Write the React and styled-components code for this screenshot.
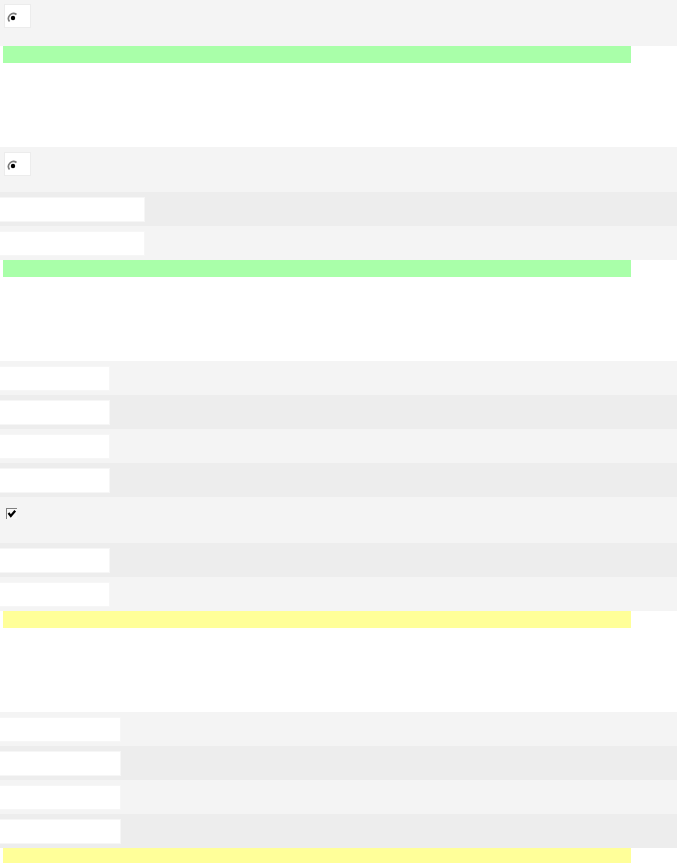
import React from 'react';
import styled, { createGlobalStyle } from 'styled-components';

// --- Styles --- //

const GlobalStyle = createGlobalStyle`
  body {
    margin: 0;
    background: #ffffff;
    font-family: "Liberation Sans", Arial, sans-serif;
  }
`

const Page = styled.div`
  display: flex;
  flex-direction: column;
  width: 677px;
`

const Section = styled.section`
  display: flex;
  flex-direction: column;
  margin-top: ${p => p.gap || 0}px;
`

const Panel = styled.div`
  background-color: #f4f4f4;
  height: ${p => p.h}px;
  padding: ${p => p.pad || '5px 4px'};
  box-sizing: border-box;
`

const RadioBox = styled.div`
  width: 27px;
  height: 24px;
  background-color: #ffffff;
  border: 1px solid #ececec;
  box-sizing: border-box;
  display: flex;
  align-items: center;
  padding: 3px 0 0 2px;
`

const CheckBox = styled.div`
  width: 11px;
  height: 11px;
  margin: 11px 0 0 6px;
  box-sizing: border-box;
  border-top: 1px solid #808080;
  border-left: 1px solid #808080;
  background-color: #f8f8f8;
  display: flex;
`

const Row = styled.div`
  height: 34px;
  display: flex;
  align-items: center;
  background-color: ${p => (p.dark ? '#ededed' : '#f4f4f4')};
`

const Field = styled.div`
  width: ${p => p.w}px;
  height: 25px;
  background-color: #ffffff;
  border: 1px solid #f6f6f6;
  border-left: none;
  box-sizing: border-box;
`

const Bar = styled.div`
  height: 17px;
  width: 628px;
  margin-left: 3px;
  background-color: ${p => (p.tone === 'yellow' ? '#ffff99' : '#a9ffa9')};
`

// --- Component --- //

const Radio = () => (
  <RadioBox>
    <svg width="12" height="12" viewBox="0 0 12 12">
      <path d="M9.5 2.5 A5 5 0 0 0 2.5 9.5" stroke="#7a7a7a" strokeWidth="1.6" fill="none" />
      <circle cx="6" cy="6" r="2.2" fill="#000" />
    </svg>
  </RadioBox>
)

const Check = () => (
  <CheckBox>
    <svg width="10" height="10" viewBox="0 0 10 10">
      <path d="M1.5 4 L3.8 7 L8.2 1.8" stroke="#000" strokeWidth="2.2" fill="none" />
    </svg>
  </CheckBox>
)

const Rows = ({ count, width, startDark }) =>
  Array.from({ length: count }).map((_, i) => (
    <Row key={i} dark={startDark ? i % 2 === 0 : i % 2 === 1}>
      <Field w={width} />
    </Row>
  ))

const App = () => (
  <Page>
    <GlobalStyle />
    <Section>
      <Panel h={46} pad="4px 4px">
        <Radio />
      </Panel>
      <Bar />
    </Section>

    <Section gap={84}>
      <Panel h={45}>
        <Radio />
      </Panel>
      <Rows count={2} width={145} startDark />
      <Bar />
    </Section>

    <Section gap={84}>
      <Rows count={4} width={110} />
      <Panel h={46} pad="0">
        <Check />
      </Panel>
      <Rows count={2} width={110} startDark />
      <Bar tone="yellow" />
    </Section>

    <Section gap={84}>
      <Rows count={4} width={121} />
      <Bar tone="yellow" />
    </Section>
  </Page>
)

export default App;
